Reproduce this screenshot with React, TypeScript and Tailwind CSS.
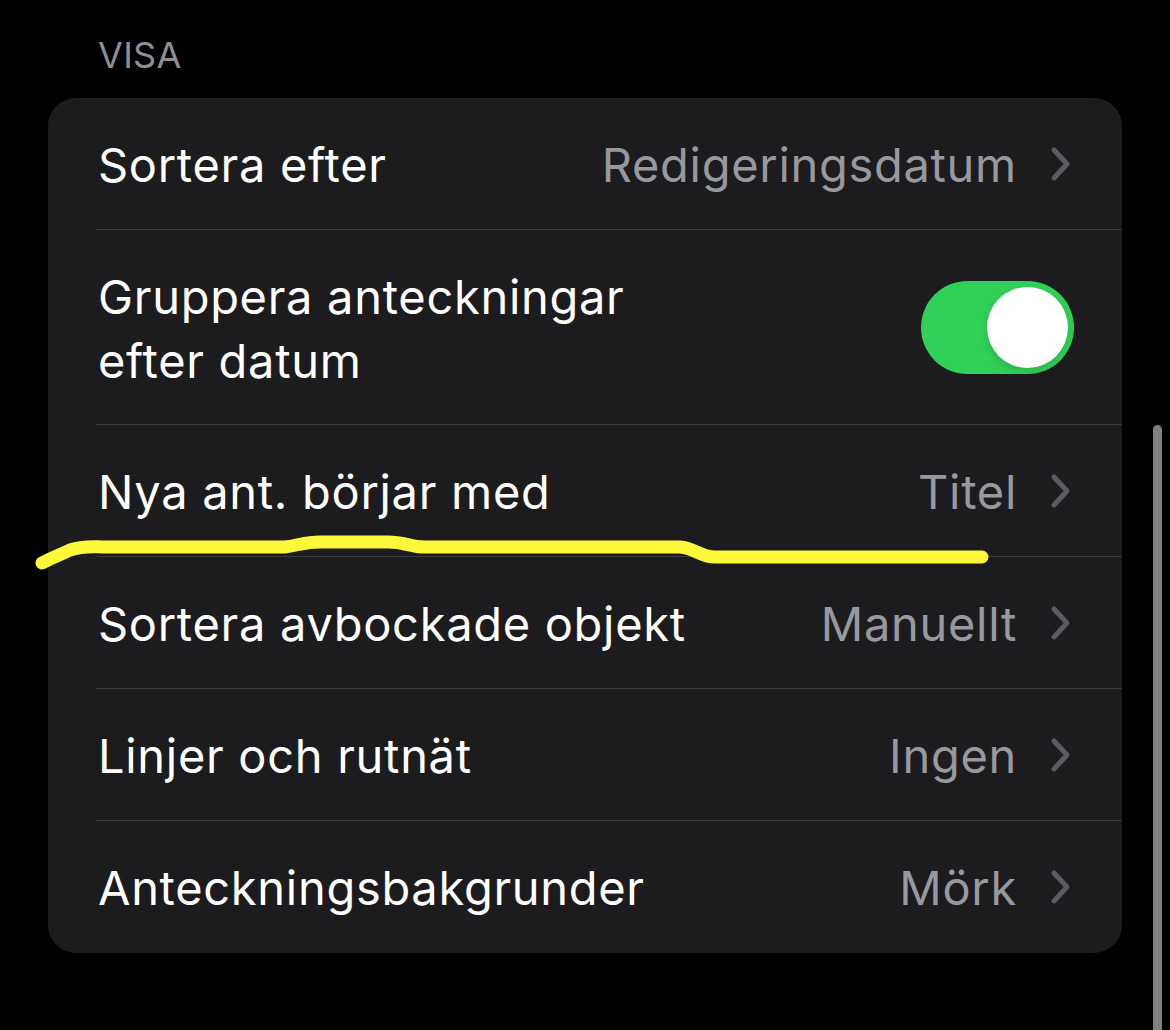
import React from 'react';

type Row = {
  label: string;
  value: string;
};

const rows: Row[] = [
  { label: 'Nya ant. börjar med', value: 'Titel' },
  { label: 'Sortera avbockade objekt', value: 'Manuellt' },
  { label: 'Linjer och rutnät', value: 'Ingen' },
  { label: 'Anteckningsbakgrunder', value: 'Mörk' },
];

const font = { fontFamily: 'Inter, "Noto Sans", sans-serif' };

const Chevron: React.FC = () => (
  <svg width="22" height="36" viewBox="0 0 22 36" className="ml-[33px] shrink-0">
    <path d="M4 4 L17 18 L4 32" fill="none" stroke="#5b5b60" strokeWidth="5" strokeLinecap="round" strokeLinejoin="round" />
  </svg>
);

const NavRow: React.FC<Row & { last?: boolean }> = ({ label, value, last }) => (
  <div className="pl-[48px]">
    <div
      className={`flex h-[132px] items-center justify-between pr-[50px] ${last ? '' : 'border-b border-[#3a3a3c]'}`}
    >
      <span className="pl-[2px] pt-[3px] text-[47px] tracking-[0.7px] text-white">{label}</span>
      <div className="flex items-center">
        <span className="pt-[3px] text-[47px] tracking-[0.7px] text-[#98989f]">{value}</span>
        <Chevron />
      </div>
    </div>
  </div>
);

export default function App() {
  return (
    <div className="relative h-[1030px] w-full overflow-hidden bg-black" style={font}>
      {/* Section header */}
      <div className="pl-[98px] pt-[33px] text-[36px] leading-[44px] tracking-[0.3px] text-[#8e8e93]">VISA</div>

      {/* Settings card */}
      <div className="mx-[48px] mt-[21px] overflow-hidden rounded-[28px] bg-[#1c1c1e]">
        <NavRow label="Sortera efter" value="Redigeringsdatum" />

        <div className="pl-[48px]">
          <div className="flex h-[195px] items-center justify-between border-b border-[#3a3a3c] pr-[48px]">
            <span className="pl-[2px] pt-[3px] text-[47px] leading-[64px] tracking-[0.7px] text-white">
              Gruppera anteckningar
              <br />
              efter datum
            </span>
            <div className="relative h-[93px] w-[153px] rounded-full bg-[#30d158]">
              <div className="absolute right-[6px] top-[6px] h-[81px] w-[81px] rounded-full bg-white shadow-[0_3px_8px_rgba(0,0,0,0.15)]" />
            </div>
          </div>
        </div>

        {rows.map((r, i) => (
          <NavRow key={r.label} {...r} last={i === rows.length - 1} />
        ))}
      </div>

      {/* Scroll indicator */}
      <div className="absolute left-[1153px] top-[425px] h-[640px] w-[9px] rounded-full bg-[#7f7f7f]" />

      {/* Yellow marker stroke */}
      <svg className="pointer-events-none absolute left-0 top-0" width="1170" height="1030">
        <path
          d="M42 563 C55 556 62 554 70 550 C85 545 95 547 105 547 L285 547 C300 545 305 542 320 542 L388 542 C405 542 410 547 425 547 L680 547 C695 548 700 557 715 557 L982 557"
          fill="none"
          stroke="#fdf83a"
          strokeWidth="13"
          strokeLinecap="round"
          strokeLinejoin="round"
        />
      </svg>
    </div>
  );
}
